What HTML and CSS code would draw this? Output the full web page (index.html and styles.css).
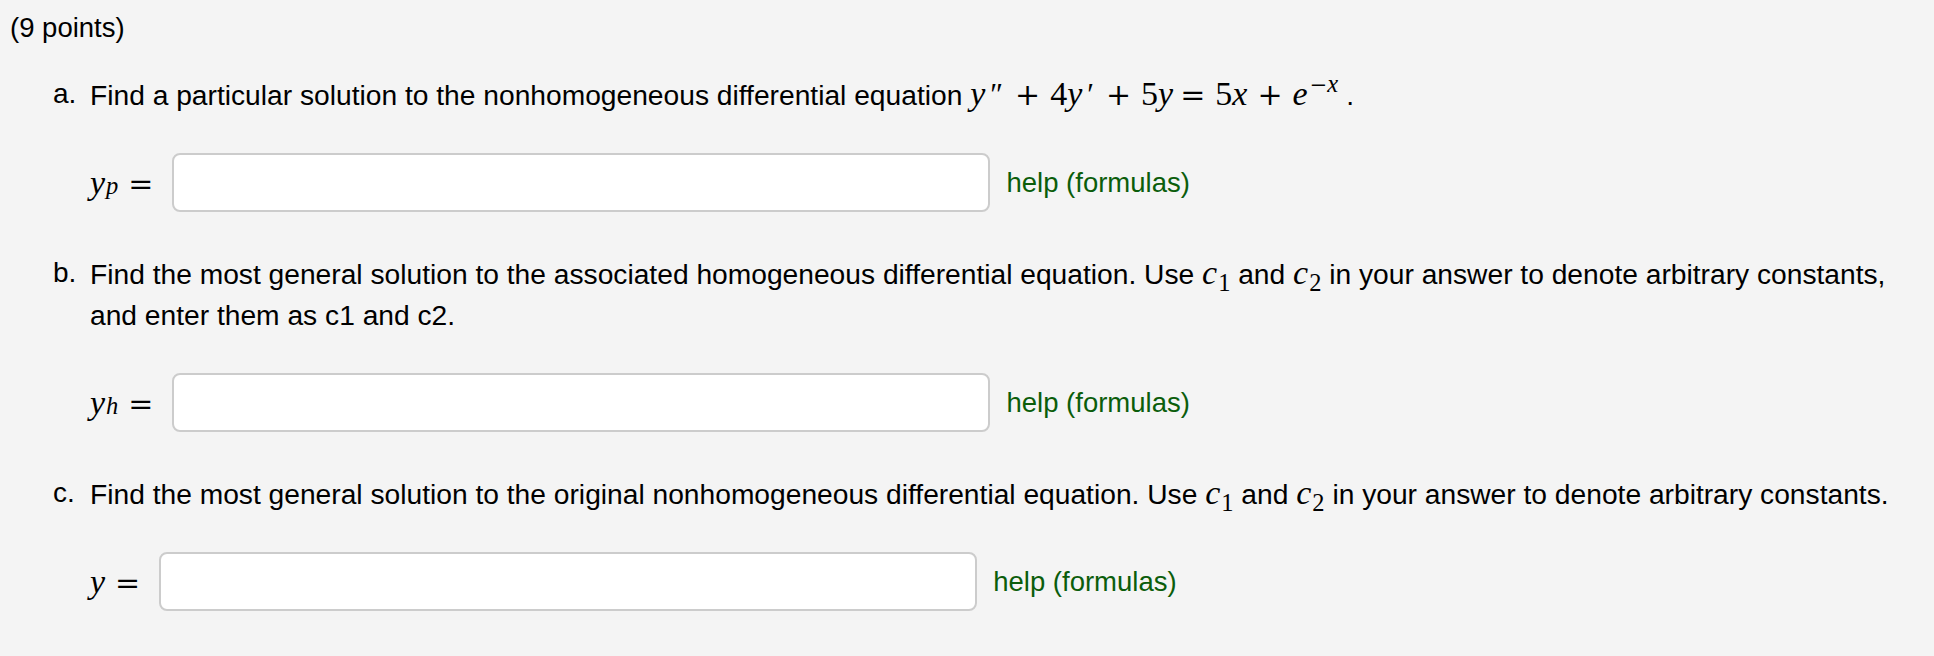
FILE: index.html
```html
<!DOCTYPE html>
<html lang="en">
<head>
<meta charset="utf-8">
<title>Problem</title>
<link rel="stylesheet" href="styles.css">
</head>
<body>
<div class="problem">
  <p class="points">(9 points)</p>
  <ol class="parts">
    <li class="part">
      <span class="marker">a.</span>
      <div class="body">
        <p class="q">Find a particular solution to the nonhomogeneous differential equation <span class="math"><i class="mi">y</i><span class="prime">″</span><span class="bin">+</span>4<i class="mi">y</i><span class="prime">′</span><span class="bin">+</span>5<i class="mi">y</i><span class="rel">=</span>5<i class="mi">x</i><span class="bin">+</span><i class="mi">e</i><sup class="sup"><span class="minus">−</span><i class="mi">x</i></sup></span><span class="dot">.</span></p>
        <div class="answer">
          <span class="label math"><i class="mi">y</i><sub class="sub mi">p</sub><span class="rel">=</span></span>
          <input class="field" type="text">
          <a class="help" href="#">help (formulas)</a>
        </div>
      </div>
    </li>
    <li class="part">
      <span class="marker">b.</span>
      <div class="body">
        <p class="q">Find the most general solution to the associated homogeneous differential equation. Use <span class="math"><i class="mi">c</i><sub class="sub">1</sub></span> and <span class="math"><i class="mi">c</i><sub class="sub">2</sub></span> in your answer to denote arbitrary constants, and enter them as c1 and c2.</p>
        <div class="answer">
          <span class="label math"><i class="mi">y</i><sub class="sub mi">h</sub><span class="rel">=</span></span>
          <input class="field" type="text">
          <a class="help" href="#">help (formulas)</a>
        </div>
      </div>
    </li>
    <li class="part">
      <span class="marker">c.</span>
      <div class="body">
        <p class="q">Find the most general solution to the original nonhomogeneous differential equation. Use <span class="math"><i class="mi">c</i><sub class="sub">1</sub></span> and <span class="math"><i class="mi">c</i><sub class="sub">2</sub></span> in your answer to denote arbitrary constants.</p>
        <div class="answer">
          <span class="label math"><i class="mi">y</i><span class="rel">=</span></span>
          <input class="field" type="text">
          <a class="help" href="#">help (formulas)</a>
        </div>
      </div>
    </li>
  </ol>
</div>
</body>
</html>
```

FILE: styles.css
```css
html, body {
  margin: 0;
  padding: 0;
  background: #f4f4f4;
}

body {
  font-family: "Liberation Sans", Arial, Helvetica, sans-serif;
  font-size: 27.5px;
  line-height: 41px;
  color: #000;
}

.problem {
  padding: 7px 25px 0 10px;
}

.points {
  margin: 0 0 25px 0;
}

.parts {
  list-style: none;
  margin: 0;
  padding: 0 0 0 43px;
}

.part {
  display: flex;
  margin-bottom: 40px;
}

.marker {
  flex: 0 0 37px;
  font-size: 28px;
}

.body {
  flex: 1 1 auto;
  min-width: 0;
}

.q {
  margin: 0;
  font-size: 28.2px;
}

.math {
  font-family: "Liberation Serif", "Times New Roman", serif;
  font-size: 34px;
  white-space: nowrap;
}

.mi {
  font-style: italic;
}

.prime {
  font-size: 0.9em;
  margin: 0 2px 0 5px;
}

.bin,
.rel,
.minus {
  font-family: "DejaVu Serif", serif;
  font-size: 30px;
}

.bin {
  margin: 0 10px;
}

.rel {
  margin: 0 10px 0 7px;
}

.sup {
  font-size: 0.72em;
  vertical-align: 0.55em;
  line-height: 0;
  margin-left: 2px;
}

.sup .minus {
  font-size: 21px;
}

.dot {
  margin-left: 8px;
}

.sub {
  font-size: 0.72em;
  vertical-align: -0.28em;
  line-height: 0;
  margin-left: 1px;
}

.answer {
  display: flex;
  align-items: center;
  margin: 37px 0 0 0;
}

.label {
  display: inline-flex;
  align-items: baseline;
}

.label .rel {
  margin: 0 0 0 10px;
}

.field {
  width: 818px;
  height: 59px;
  box-sizing: border-box;
  margin: 0 0 0 19px;
  border: 2px solid #cccccc;
  border-radius: 8px;
  background: #fff;
  outline: none;
}

.help {
  margin-left: 16px;
  color: #0b5d0b;
  text-decoration: none;
}
```
